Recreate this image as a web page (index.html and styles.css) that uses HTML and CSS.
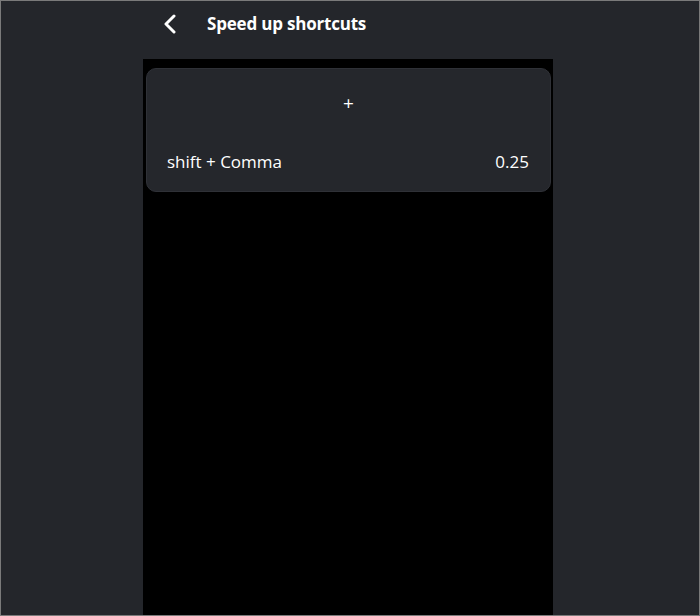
FILE: index.html
```html
<!DOCTYPE html>
<html>
<head>
    <title>Speed up shortcuts</title>
    <meta charset="UTF-8">
    <meta name="viewport" content="width=device-width, initial-scale=1.0">
    <link rel="stylesheet" href="styles.css">
</head>
<body>
    <div class="window">
        <header class="header">
            <button class="back" aria-label="Back">
                <svg width="14" height="20" viewBox="0 0 14 20">
                    <path d="M11 2 L3 10 L11 18" fill="none" stroke="#fff" stroke-width="3" stroke-linecap="round" stroke-linejoin="round"/>
                </svg>
            </button>
            <h1 class="title">Speed up shortcuts</h1>
        </header>

        <div class="panel">
            <div class="card">
                <button class="add">+</button>
                <div class="shortcut">
                    <span class="keys">shift + Comma</span>
                    <span class="value">0.25</span>
                </div>
            </div>
        </div>
    </div>
</body>
</html>
```

FILE: styles.css
```css
/* page */
html, body {
    margin: 0;
    height: 100%;
}

body {
    font-family: "Open Sans", "Noto Sans", sans-serif;
    background-color: #24262b;
    color: #fff;
}

.window {
    box-sizing: border-box;
    height: 616px;
    border: 1px solid #7a7a7a;
    background-color: #24262b;
    display: flex;
    flex-direction: column;
    padding-left: 142px;
    padding-right: 146px;
}

/* header */
.header {
    height: 46px;
    margin-bottom: 12px;
    display: flex;
    align-items: center;
    flex-shrink: 0;
}

.back {
    background: none;
    border: 0;
    padding: 0;
    margin-left: 20px;
    width: 14px;
    height: 20px;
    display: flex;
    cursor: pointer;
}

.title {
    margin: 0 0 0 30px;
    font-size: 17px;
    font-weight: 700;
    letter-spacing: -0.2px;
    padding-bottom: 1px;
}

/* list panel */
.panel {
    flex: 1;
    background-color: #000;
    padding: 9px 2px 0 3px;
}

.card {
    background-color: #25272c;
    border: 1px solid #2f3137;
    border-radius: 10px;
    box-shadow: 0 1px 2px rgba(0, 0, 0, 0.6);
    height: 124px;
    box-sizing: border-box;
    display: flex;
    flex-direction: column;
}

.add {
    background: none;
    border: 0;
    color: #fff;
    font-family: inherit;
    font-size: 19px;
    height: 67px;
    padding: 0;
    flex-shrink: 0;
    cursor: pointer;
}

.shortcut {
    display: flex;
    justify-content: space-between;
    align-items: center;
    padding: 0 21px 0 20px;
    height: 50px;
    font-size: 17px;
}
```
